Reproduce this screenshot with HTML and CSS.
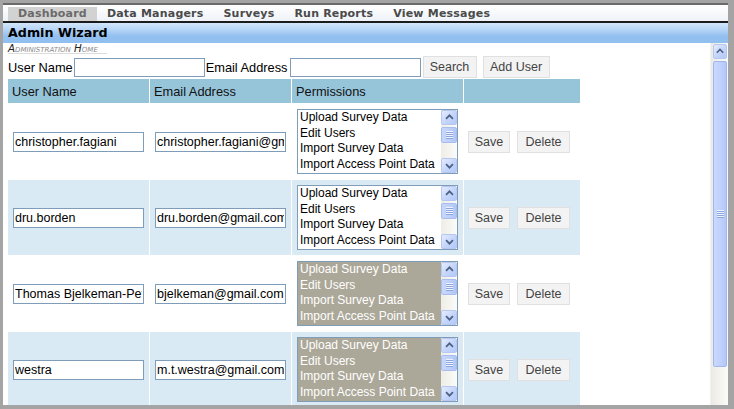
FILE: index.html
```html
<!DOCTYPE html>
<html>
<head>
<meta charset="utf-8">
<link rel="stylesheet" href="styles.css">
</head>
<body>
<div class="frame">
  <div class="nav">
    <span class="tab active">Dashboard</span>
    <span class="tab">Data Managers</span>
    <span class="tab">Surveys</span>
    <span class="tab">Run Reports</span>
    <span class="tab">View Messages</span>
  </div>
  <div class="titlebar">Admin Wizard</div>
  <div class="content">
    <div class="main">
      <div class="crumb"><span class="cap">A</span>dministration <span class="cap">H</span>ome</div>
      <div class="search">
        <span class="lbl">User Name</span><input class="field f-user" type="text">
        <span class="lbl">Email Address</span><input class="field f-mail" type="text">
        <button class="btn b-search">Search</button><button class="btn b-add">Add User</button>
      </div>
      <table class="grid">
        <colgroup><col class="c1"><col class="c2"><col class="c3"><col class="c4"></colgroup>
        <thead>
          <tr><th>User Name</th><th>Email Address</th><th>Permissions</th><th></th></tr>
        </thead>
        <tbody>
          <tr>
            <td><input class="cell-in" type="text" value="christopher.fagiani"></td>
            <td><input class="cell-in" type="text" value="christopher.fagiani@gmail.com"></td>
            <td>
              <div class="sel">
                <div class="opts"><div>Upload Survey Data</div><div>Edit Users</div><div>Import Survey Data</div><div>Import Access Point Data</div></div>
                <div class="ssb">
                  <div class="sbtn"><svg viewBox="0 0 15 15" width="13" height="13"><polyline points="3.5,9 7.5,5 11.5,9" fill="none" stroke="#4d6185" stroke-width="2"/></svg></div>
                  <div class="sthumb"><div class="grip"></div></div>
                  <div class="strack"></div>
                  <div class="sbtn"><svg viewBox="0 0 15 15" width="13" height="13"><polyline points="3.5,6 7.5,10 11.5,6" fill="none" stroke="#4d6185" stroke-width="2"/></svg></div>
                </div>
              </div>
            </td>
            <td><div class="acts"><button class="btn b-save">Save</button><button class="btn b-del">Delete</button></div></td>
          </tr>
          <tr class="alt">
            <td><input class="cell-in" type="text" value="dru.borden"></td>
            <td><input class="cell-in" type="text" value="dru.borden@gmail.com"></td>
            <td>
              <div class="sel">
                <div class="opts"><div>Upload Survey Data</div><div>Edit Users</div><div>Import Survey Data</div><div>Import Access Point Data</div></div>
                <div class="ssb">
                  <div class="sbtn"><svg viewBox="0 0 15 15" width="13" height="13"><polyline points="3.5,9 7.5,5 11.5,9" fill="none" stroke="#4d6185" stroke-width="2"/></svg></div>
                  <div class="sthumb"><div class="grip"></div></div>
                  <div class="strack"></div>
                  <div class="sbtn"><svg viewBox="0 0 15 15" width="13" height="13"><polyline points="3.5,6 7.5,10 11.5,6" fill="none" stroke="#4d6185" stroke-width="2"/></svg></div>
                </div>
              </div>
            </td>
            <td><div class="acts"><button class="btn b-save">Save</button><button class="btn b-del">Delete</button></div></td>
          </tr>
          <tr>
            <td><input class="cell-in" type="text" value="Thomas Bjelkeman-Pettersson"></td>
            <td><input class="cell-in" type="text" value="bjelkeman@gmail.com"></td>
            <td>
              <div class="sel dis">
                <div class="opts"><div>Upload Survey Data</div><div>Edit Users</div><div>Import Survey Data</div><div>Import Access Point Data</div></div>
                <div class="ssb">
                  <div class="sbtn"><svg viewBox="0 0 15 15" width="13" height="13"><polyline points="3.5,9 7.5,5 11.5,9" fill="none" stroke="#4d6185" stroke-width="2"/></svg></div>
                  <div class="sthumb"><div class="grip"></div></div>
                  <div class="strack"></div>
                  <div class="sbtn"><svg viewBox="0 0 15 15" width="13" height="13"><polyline points="3.5,6 7.5,10 11.5,6" fill="none" stroke="#4d6185" stroke-width="2"/></svg></div>
                </div>
              </div>
            </td>
            <td><div class="acts"><button class="btn b-save">Save</button><button class="btn b-del">Delete</button></div></td>
          </tr>
          <tr class="alt">
            <td><input class="cell-in" type="text" value="westra"></td>
            <td><input class="cell-in" type="text" value="m.t.westra@gmail.com"></td>
            <td>
              <div class="sel dis">
                <div class="opts"><div>Upload Survey Data</div><div>Edit Users</div><div>Import Survey Data</div><div>Import Access Point Data</div></div>
                <div class="ssb">
                  <div class="sbtn"><svg viewBox="0 0 15 15" width="13" height="13"><polyline points="3.5,9 7.5,5 11.5,9" fill="none" stroke="#4d6185" stroke-width="2"/></svg></div>
                  <div class="sthumb"><div class="grip"></div></div>
                  <div class="strack"></div>
                  <div class="sbtn"><svg viewBox="0 0 15 15" width="13" height="13"><polyline points="3.5,6 7.5,10 11.5,6" fill="none" stroke="#4d6185" stroke-width="2"/></svg></div>
                </div>
              </div>
            </td>
            <td><div class="acts"><button class="btn b-save">Save</button><button class="btn b-del">Delete</button></div></td>
          </tr>
        </tbody>
      </table>
    </div>
    <div class="vscroll">
      <div class="vbtn"><svg viewBox="0 0 15 15" width="13" height="13"><polyline points="3.5,9 7.5,5 11.5,9" fill="none" stroke="#4d6185" stroke-width="2"/></svg></div>
      <div class="vthumb"><div class="grip"></div></div>
    </div>
  </div>
</div>
</body>
</html>
```

FILE: styles.css
```css
* { box-sizing: border-box; }
html, body { margin: 0; padding: 0; background: #fff; }
body { font-family: "Liberation Sans", Arial, sans-serif; color: #000; }

.frame {
  width: 734px;
  height: 409px;
  border-style: solid;
  border-color: #a4a4a4;
  border-width: 3px 6px 4px 3px;
  display: flex;
  flex-direction: column;
  overflow: hidden;
  background: #fff;
}

.nav {
  height: 20px;
  flex: none;
  border-top: 2px solid #6a6a6a;
  border-bottom: 2px solid #1c1c1c;
  background: linear-gradient(to bottom, #ffffff, #eef2f7);
  display: flex;
  align-items: flex-start;
  padding-left: 5px;
}
.tab {
  margin-top: 2px;
  height: 14px;
  line-height: 14px;
  padding: 0 10px;
  font-family: "DejaVu Sans", Verdana, sans-serif;
  font-weight: bold;
  font-size: 11px;
  letter-spacing: 0.2px;
  color: #4a4a4a;
  white-space: nowrap;
}
.tab.active { background: #d2d2d2; color: #6a6a6a; }

.titlebar {
  height: 20px;
  flex: none;
  line-height: 20px;
  padding-left: 5px;
  font-family: "DejaVu Sans", Verdana, sans-serif;
  font-weight: bold;
  font-size: 12.7px;
  color: #000;
  background: linear-gradient(to bottom, #d2e6fa 0%, #b4d4f6 35%, #93c0f0 65%, #90bff0 100%);
}

.content {
  flex: 1;
  display: flex;
  min-height: 0;
}
.main {
  flex: 1;
  padding-left: 5px;
  overflow: hidden;
}

.crumb {
  width: fit-content;
  margin-top: 1px;
  height: 10px;
  line-height: 9px;
  padding-right: 9px;
  border-bottom: 1px solid #dcdcdc;
  font-family: "DejaVu Sans", Verdana, sans-serif;
  font-style: italic;
  font-variant: small-caps;
  font-size: 10.3px;
  color: #8a8a8a;
}
.crumb .cap { color: #222; }

.search {
  display: flex;
  align-items: center;
  height: 22px;
  margin-top: 2px;
}
.lbl { font-size: 12.8px; color: #000; white-space: nowrap; }
.field {
  width: 131px;
  height: 19px;
  border: 1px solid #7f9db9;
  padding: 0 2px;
  margin: 0 1px 0 1px;
  font-family: "Liberation Sans", Arial, sans-serif;
  font-size: 12.5px;
  outline: none;
}
.f-mail { margin-left: 2px; }
.btn {
  height: 22px;
  padding: 0 6px;
  background: #f3f3f3;
  border: 1px solid #e0e0e0;
  color: #444;
  font-family: "Liberation Sans", Arial, sans-serif;
  font-size: 12.5px;
  line-height: 20px;
  cursor: pointer;
}
.b-search { margin-left: 1px; width: 54px; }
.b-add { margin-left: 6px; width: 67px; }

.grid {
  border-collapse: separate;
  border-spacing: 1px;
  table-layout: fixed;
  width: 574px;
  margin-left: -1px;
  margin-top: 0;
}
.c1 { width: 141px; }
.c2 { width: 141px; }
.c3 { width: 171px; }
.c4 { width: 116px; }

.grid th {
  height: 24px;
  background: #96c4d9;
  font-weight: normal;
  text-align: left;
  padding: 0 0 0 4px;
  font-size: 12.8px;
  color: #111;
}
.grid td {
  height: 75px;
  padding: 0 0 0 5px;
  vertical-align: middle;
}
.grid tr.alt td { background: #d9eaf4; }
.grid td:last-child { padding-left: 4px; }

.acts { display: flex; align-items: center; }
.b-save { width: 42px; padding: 0; }
.b-del { width: 53px; padding: 0; margin-left: 7px; }

.cell-in {
  display: block;
  width: 131px;
  height: 20px;
  border: 1px solid #7f9db9;
  padding: 0 1px;
  font-family: "Liberation Sans", Arial, sans-serif;
  font-size: 12.5px;
  color: #000;
  background: #fff;
  outline: none;
}

.sel {
  width: 161px;
  height: 65px;
  border: 1px solid #7f9db9;
  background: #fff;
  display: flex;
}
.sel.dis { background: #aca899; }
.opts {
  flex: 1;
  overflow: hidden;
  padding: 0 0 0 2px;
  font-size: 12px;
  line-height: 15.6px;
  color: #000;
  white-space: nowrap;
}
.sel.dis .opts { color: #fff; }

.ssb {
  width: 16px;
  flex: none;
  display: flex;
  flex-direction: column;
  background: linear-gradient(to right, #eeede6, #fbfbf8);
}
.sbtn, .vbtn {
  height: 15px;
  flex: none;
  border: 1px solid #b6c8f2;
  border-radius: 2px;
  background: linear-gradient(135deg, #e4ecfe 0%, #c4d5fb 55%, #b5c9f7 100%);
  display: flex;
  align-items: center;
  justify-content: center;
}
.sthumb {
  height: 16px;
  margin-top: 2px;
  flex: none;
  border: 1px solid #a7bdf0;
  border-radius: 2px;
  background: linear-gradient(to right, #c8d7fd, #bccefa 60%, #b2c6f6);
  display: flex;
  align-items: center;
  justify-content: center;
}
.strack { flex: 1; }

.grip {
  width: 7px;
  height: 8px;
  background: repeating-linear-gradient(to bottom, #eef3ff 0, #eef3ff 1px, #8ca6e2 1px, #8ca6e2 2px);
}

.vscroll {
  width: 18px;
  flex: none;
  padding: 1px 2px 0 2px;
  background: linear-gradient(to right, #eceae2, #fbfbf9);
  border-left: 1px solid #f2f2f2;
  display: flex;
  flex-direction: column;
}
.vbtn { width: 14px; }
.vthumb {
  width: 14px;
  height: 306px;
  margin-top: 2px;
  border: 1px solid #9fb7ee;
  border-radius: 2px;
  background: linear-gradient(to right, #c9d8fd, #bed0fb 60%, #b3c7f7);
  display: flex;
  align-items: center;
  justify-content: center;
}
```
